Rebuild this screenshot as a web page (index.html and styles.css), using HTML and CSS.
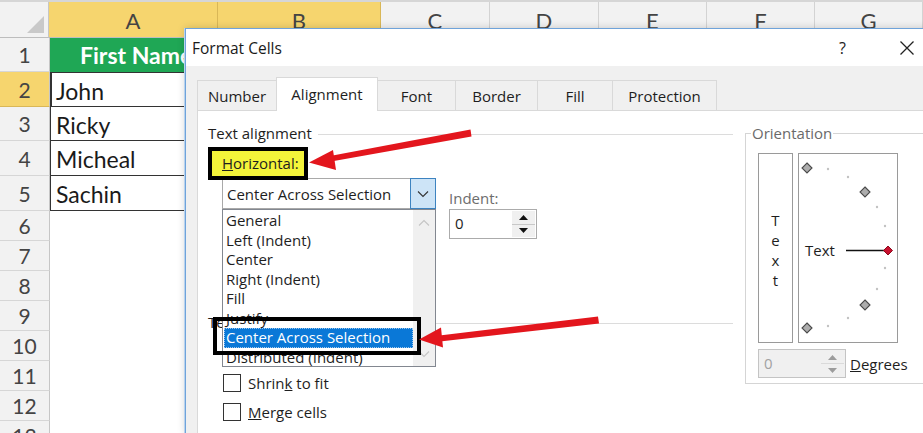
FILE: index.html
```html
<!DOCTYPE html>
<html>
<head>
<meta charset="utf-8">
<link rel="stylesheet" href="styles.css">
</head>
<body>
<div class="sheet">
  <div class="strip"></div>
  <div class="row colheads">
    <div class="corner"><span class="tri"></span></div>
    <div class="ch w-a sel">A</div>
    <div class="ch w-b sel">B</div>
    <div class="ch w-c">C</div>
    <div class="ch w-d">D</div>
    <div class="ch w-e">E</div>
    <div class="ch w-f">F</div>
    <div class="ch w-g">G</div>
  </div>
  <div class="row r1"><div class="rh">1</div><div class="cell head">First Name</div></div>
  <div class="row r2"><div class="rh sel">2</div><div class="cell data active">John</div></div>
  <div class="row r3"><div class="rh">3</div><div class="cell data">Ricky</div></div>
  <div class="row r4"><div class="rh">4</div><div class="cell data">Micheal</div></div>
  <div class="row r5"><div class="rh">5</div><div class="cell data">Sachin</div></div>
  <div class="row rs"><div class="rh">6</div><div class="cell"></div></div>
  <div class="row rs"><div class="rh">7</div><div class="cell"></div></div>
  <div class="row rs"><div class="rh">8</div><div class="cell"></div></div>
  <div class="row rs"><div class="rh">9</div><div class="cell"></div></div>
  <div class="row rs"><div class="rh">10</div><div class="cell"></div></div>
  <div class="row rs"><div class="rh">11</div><div class="cell"></div></div>
  <div class="row rs"><div class="rh">12</div><div class="cell"></div></div>
  <div class="row rs"><div class="rh">13</div><div class="cell"></div></div>
</div>

<div class="dialog">
  <div class="titlebar">
    <span class="title">Format Cells</span>
    <span class="help">?</span>
    <span class="close"><svg width="16" height="16" viewBox="0 0 16 16"><path d="M1.5 1.5 L14.5 14.5 M14.5 1.5 L1.5 14.5" stroke="#222" stroke-width="1.3" fill="none"/></svg></span>
  </div>
  <div class="dbody">
    <div class="tabs">
      <div class="tab t-num">Number</div>
      <div class="tab t-align active">Alignment</div>
      <div class="tab t-font">Font</div>
      <div class="tab t-border">Border</div>
      <div class="tab t-fill">Fill</div>
      <div class="tab t-prot">Protection</div>
    </div>
    <div class="panel">
      <div class="leftcol">
        <div class="group-head"><span>Text alignment</span><i class="rule"></i></div>
        <div class="field-label"><span class="hl"><u>H</u>orizontal:</span></div>
        <div class="h-row">
          <div class="combo">
            <div class="combo-box">
              <span class="combo-val">Center Across Selection</span>
              <span class="combo-btn"><svg width="12" height="8" viewBox="0 0 12 8"><path d="M1 1.5 L6 6.5 L11 1.5" stroke="#333" stroke-width="1.1" fill="none"/></svg></span>
            </div>
            <div class="listbox">
              <div class="items">
                <div class="item">General</div>
                <div class="item">Left (Indent)</div>
                <div class="item">Center</div>
                <div class="item">Right (Indent)</div>
                <div class="item">Fill</div>
                <div class="item">Justify</div>
                <div class="item chosen"><span>Center Across Selection</span></div>
                <div class="item">Distributed (Indent)</div>
              </div>
              <div class="vscroll">
                <svg width="12" height="8" viewBox="0 0 12 8"><path d="M1 6.5 L6 1.5 L11 6.5" stroke="#c4c4c4" stroke-width="1.1" fill="none"/></svg>
                <svg width="12" height="8" viewBox="0 0 12 8"><path d="M1 1.5 L6 6.5 L11 1.5" stroke="#c4c4c4" stroke-width="1.1" fill="none"/></svg>
              </div>
            </div>
          </div>
          <div class="indent">
            <div class="indent-label">Indent:</div>
            <div class="spin">
              <span class="spin-val">0</span>
              <span class="spin-btns">
                <span class="sb"><svg width="9" height="5" viewBox="0 0 9 5"><path d="M0 5 L4.5 0 L9 5 Z" fill="#111"/></svg></span>
                <span class="sb"><svg width="9" height="5" viewBox="0 0 9 5"><path d="M0 0 L4.5 5 L9 0 Z" fill="#111"/></svg></span>
              </span>
            </div>
          </div>
        </div>
        <div class="group-head ctrl"><span>Text control</span><i class="rule"></i></div>
        <div class="check first"><span class="box"></span><span>Shrin<u>k</u> to fit</span></div>
        <div class="check"><span class="box"></span><span><u>M</u>erge cells</span></div>
      </div>
      <fieldset class="orient">
        <legend>Orientation</legend>
        <div class="orient-boxes">
          <div class="vtext"><span>T</span><span>e</span><span>x</span><span>t</span></div>
          <svg class="dial" width="100" height="190" viewBox="0 0 100 190">
            <rect x="0.5" y="0.5" width="99" height="189" fill="#fff" stroke="#9a9a9a"/>
            <g fill="#c2c2c2">
              <circle cx="30" cy="16" r="1.2"/><circle cx="50" cy="24" r="1.2"/>
              <circle cx="79" cy="54" r="1.2"/><circle cx="87" cy="73" r="1.2"/>
              <circle cx="87" cy="115" r="1.2"/><circle cx="79" cy="136" r="1.2"/>
              <circle cx="50" cy="165" r="1.2"/><circle cx="30" cy="173" r="1.2"/>
            </g>
            <g fill="#adadad" stroke="#4a4a4a" stroke-width="1.1">
              <path d="M9 10 L14 15 L9 20 L4 15 Z"/>
              <path d="M67 34 L72 39 L67 44 L62 39 Z"/>
              <path d="M67 147 L72 152 L67 157 L62 152 Z"/>
              <path d="M9 170 L14 175 L9 180 L4 175 Z"/>
            </g>
            <line x1="48" y1="97.5" x2="87" y2="97.5" stroke="#111" stroke-width="1.3"/>
            <path d="M90 93 L94.5 97.5 L90 102 L85.5 97.5 Z" fill="#c8102e" stroke="#8a0a1d" stroke-width="1"/>
            <text x="7" y="103" class="dial-text">Text</text>
          </svg>
        </div>
        <div class="deg-row">
          <div class="spin deg">
            <span class="spin-val">0</span>
            <span class="spin-btns">
              <span class="sb"><svg width="9" height="5" viewBox="0 0 9 5"><path d="M0 5 L4.5 0 L9 5 Z" fill="#9c9c9c"/></svg></span>
              <span class="sb"><svg width="9" height="5" viewBox="0 0 9 5"><path d="M0 0 L4.5 5 L9 0 Z" fill="#9c9c9c"/></svg></span>
            </span>
          </div>
          <span class="deg-label"><u>D</u>egrees</span>
        </div>
      </fieldset>
    </div>
  </div>
</div>

<div class="annot-box"></div>
<svg class="arrows" width="923" height="433" viewBox="0 0 923 433">
  <g fill="#e3161d">
    <path d="M470.5 129.5 L471.5 136.5 L331 161.5 L330 156 Z"/>
    <path d="M309 162.5 L333 150 L336 170 Z"/>
    <path d="M598 316.5 L599 323.5 L440 341.5 L439.5 335.5 Z"/>
    <path d="M419 339.5 L441 327.5 L443 347.5 Z"/>
  </g>
</svg>
</body>
</html>
```

FILE: styles.css
```css
*, *::before, *::after { box-sizing: border-box; }
html, body { margin: 0; padding: 0; }
body {
  width: 923px;
  height: 433px;
  overflow: hidden;
  position: relative;
  background: #fff;
  font-family: "Open Sans", "Noto Sans", sans-serif;
  color: #1e1e1e;
}

/* ---------- spreadsheet ---------- */
.sheet { font-family: Lato, "Liberation Sans", sans-serif; height: 433px; overflow: hidden; }
.strip { height: 2px; background: #d6d6d6; }
.row { display: flex; }
.colheads { height: 36px; }
.corner {
  width: 50px; background: #f2f2f2;
  border-right: 1px solid #c6c6c6; border-bottom: 1px solid #bdbdbd;
  position: relative;
}
.tri {
  position: absolute; right: 4px; bottom: 4px;
  width: 0; height: 0;
  border-left: 17px solid transparent;
  border-bottom: 17px solid #c9c9c9;
}
.ch {
  background: #f2f2f2;
  border-right: 1px solid #d3d3d3;
  border-bottom: 1px solid #bdbdbd;
  display: flex; align-items: center; justify-content: center;
  font-size: 22px; color: #444;
  padding-top: 1px;
}
.ch.sel { background: #f6d56e; border-right-color: #d9b757; }
.w-a { width: 172px; }
.w-b { width: 166px; }
.w-c, .w-d { width: 111px; }
.w-e, .w-f { width: 110px; }
.w-g { width: 110px; }

.rh {
  width: 50px; flex: none;
  background: #f2f2f2;
  border-right: 1px solid #c6c6c6;
  border-bottom: 1px solid #d6d6d6;
  display: flex; align-items: center; justify-content: center;
  font-size: 21px; color: #444;
}
.rh.sel { background: #f6d56e; border-bottom-color: #d9b757; }
.r1 { height: 34px; }
.r2, .r4 { height: 35px; }
.r3 { height: 34px; }
.r5 { height: 35px; }
.rs { height: 30px; flex: none; }
.cell {
  width: 172px;
  display: flex; align-items: center;
  padding-left: 6px;
  font-size: 23px; color: #1a1a1a;
}
.cell.head {
  background: #1fa755; color: #fff; font-weight: 700;
  padding-left: 30px;
  white-space: nowrap;
}
.cell.data {
  border-left: 1px solid #333;
  border-bottom: 1px solid #333;
  padding-left: 5px;
  padding-top: 2px;
}
.cell.active { border-top: 1px solid #333; border-left-width: 2px; padding-left: 4px; }

/* ---------- dialog ---------- */
.dialog {
  position: absolute;
  left: 185px; top: 28px;
  width: 780px; height: 405px;
  background: #f0f0f0;
  border: 1px solid #6fa3da;
  border-bottom: none;
  box-shadow: -1px 0 0 #b9d3ee, 0 0 8px rgba(0,0,0,0.18);
  display: flex; flex-direction: column;
  font-size: 15px;
  overflow: hidden;
}
.titlebar {
  height: 37px; flex: none;
  background: #fff;
  display: flex; align-items: center;
  padding-left: 6px;
}
.title { font-size: 15.5px; color: #1a1a1a; }
.help { margin-left: auto; font-size: 16px; color: #222; margin-right: 53px; padding-top: 1px; }
.close { width: 16px; height: 16px; margin-right: 49px; display: flex; }

.dbody { flex: 1; padding: 11px 0 0 11px; display: flex; flex-direction: column; min-height: 0; }
.tabs { display: flex; align-items: flex-end; height: 33px; flex: none; }
.tab {
  height: 30px;
  border: 1px solid #d9d9d9;
  border-bottom: none;
  margin-right: -1px;
  background: #f0f0f0;
  display: flex; align-items: center; justify-content: center;
  color: #1e1e1e;
  padding-top: 1px;
}
.tab.active { height: 34px; background: #fff; position: relative; z-index: 1; margin-bottom: -1px; padding-bottom: 2px; }
.t-num { width: 80px; }
.t-align { width: 102px; }
.t-font { width: 79px; }
.t-border { width: 83px; }
.t-fill { width: 76px; }
.t-prot { width: 105px; }

.panel {
  flex: 1;
  background: #fff;
  border: 1px solid #d9d9d9;
  border-bottom: none;
  padding: 13px 0 0 10px;
  display: grid;
  grid-template-columns: 525px 200px;
  column-gap: 12px;
  align-items: start;
}

.group-head { display: flex; align-items: center; height: 19px; line-height: 19px; }
.group-head .rule { flex: 1; border-top: 1px solid #dcdcdc; margin-left: 6px; margin-top: 1px; }
.group-head.ctrl { margin-top: 74px; }

.field-label { margin-top: 11px; height: 19px; line-height: 19px; padding-left: 14px; }
.hl { position: relative; z-index: 3; }
.hl::before {
  content: "";
  position: absolute;
  left: -14px; top: -6px;
  width: 100px; height: 33px;
  border: 4px solid #000;
  background: #f4f43a;
  z-index: -1;
}

.h-row { display: flex; align-items: flex-start; margin-top: 5px; padding-left: 14px; }
.combo { position: relative; width: 214px; z-index: 2; }
.combo-box {
  height: 31px;
  border: 1px solid #a9a9a9;
  background: #fff;
  display: flex; align-items: center;
  padding-left: 4px;
}
.combo-val { flex: 1; white-space: nowrap; }
.combo-btn {
  width: 26px; height: 31px; margin: -1px -1px -1px 0;
  background: #cde4f7;
  border: 1px solid #3d83c0;
  display: flex; align-items: center; justify-content: center;
}
.listbox {
  position: absolute;
  left: 0; top: 31px;
  width: 214px; height: 158px;
  background: #fff;
  border: 1px solid #828790;
  display: flex;
}
.items { flex: 1; padding-top: 1px; }
.item { height: 19.5px; line-height: 19.5px; padding-left: 3px; white-space: nowrap; }
.item.chosen { margin-left: 1px; padding-left: 2px; background: #0a78d7; color: #fff; outline: 1px dotted #9cc7ee; outline-offset: -1px; }
.vscroll {
  width: 22px; background: #f0f0f0;
  display: flex; flex-direction: column; justify-content: space-between; align-items: center;
  padding: 9px 0 8px;
}

.indent { margin-left: 13px; margin-top: 11px; }
.indent-label { height: 19px; line-height: 19px; color: #6d6d6d; }
.spin {
  width: 88px; height: 30px;
  border: 1px solid #ababab;
  background: #fff;
  display: flex;
  margin-top: 1px;
}
.spin-val { flex: 1; padding-left: 5px; line-height: 27px; }
.spin-btns { width: 24px; display: flex; flex-direction: column; padding: 1px 1px 1px 0; }
.sb { flex: 1; display: flex; align-items: center; justify-content: center; background: #f0f0f0; }
.sb + .sb { border-top: 1px solid #c8c8c8; }

.check { display: flex; align-items: center; height: 19px; margin-top: 10px; }
.check.first { margin-top: 41px; }
.check .box { width: 18px; height: 18px; border: 1px solid #333; background: #fff; margin: 0 7px 0 15px; }

/* orientation */
.orient {
  margin: 0;
  padding: 0 0 5px 12px;
  border: 1px solid #d5d5d5;
  min-width: 0;
}
.orient legend { margin-left: -7px; padding: 0 1px; line-height: 19px; color: #6a6a6a; }
.orient-boxes { display: flex; margin-top: 10px; gap: 5px; }
.vtext {
  width: 35px; height: 190px;
  border: 1px solid #9a9a9a;
  display: flex; flex-direction: column; align-items: center; justify-content: center;
  padding-top: 4px;
}
.vtext span { display: block; height: 20px; line-height: 20px; }
.dial { display: block; }
.dial-text { font-family: "Open Sans", "Noto Sans", sans-serif; font-size: 15px; fill: #1e1e1e; }
.deg-row { display: flex; align-items: center; margin-top: 6px; }
.spin.deg { width: 88px; height: 29px; background: #f0f0f0; border-color: #c4c4c4; margin-top: 0; }
.spin.deg .spin-val { color: #a2a2a2; }
.spin.deg .sb { background: #f0f0f0; }
.spin.deg .sb + .sb { border-top-color: #dadada; }
.deg-label { margin-left: 4px; }

/* annotations */
.annot-box {
  position: absolute;
  z-index: 5;
  left: 213px; top: 317px;
  width: 208px; height: 38px;
  border: 4px solid #000;
}
.arrows { position: absolute; z-index: 6; left: 0; top: 0; pointer-events: none; }
```
